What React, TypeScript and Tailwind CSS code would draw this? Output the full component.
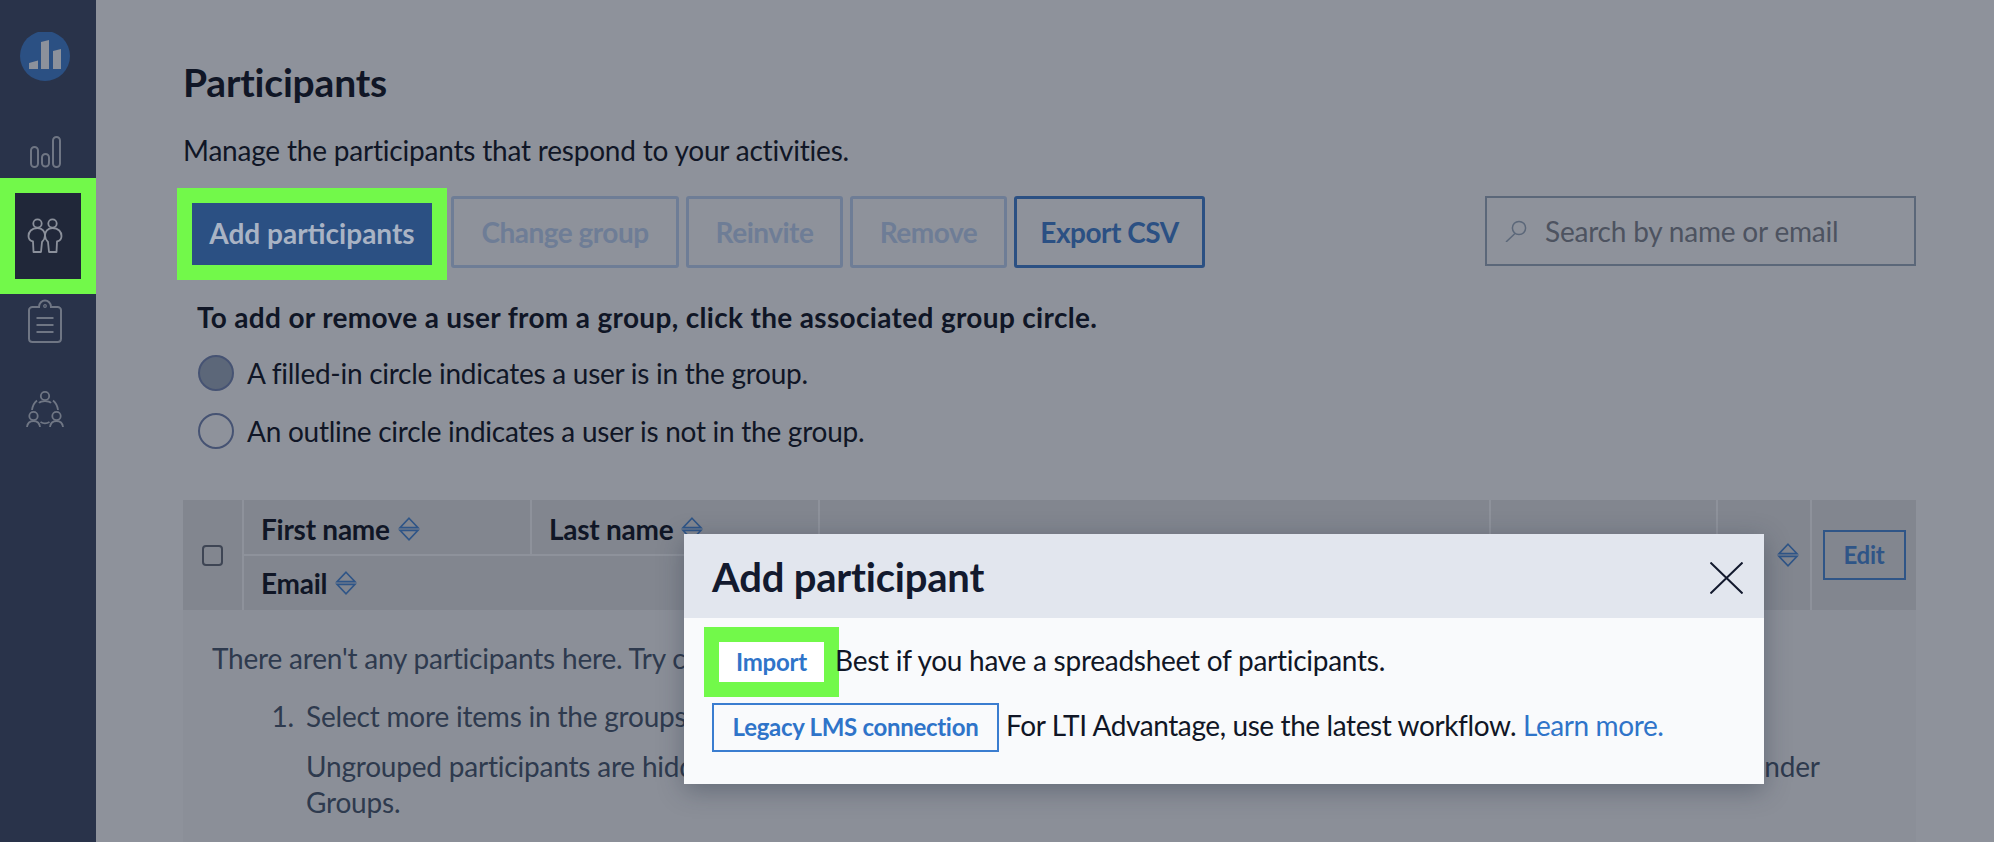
const ICON = '#6f7684';
const ICON_ACTIVE = '#8b909b';
const HEADER_CELL = 'bg-[#82868f]';

function SortIcon() {
  return (
    <svg viewBox="0 0 22 24" className="h-6 w-[22px] shrink-0" fill="none" stroke="#2f5587" strokeWidth="1.6">
      <path d="M11 1.2 L20 10.6 H2 Z" />
      <path d="M2 13.4 H20 L11 22.8 Z" />
    </svg>
  );
}

function Logo() {
  return (
    <svg viewBox="0 0 50 50" className="h-[50px] w-[50px]">
      <circle cx="25" cy="24" r="25" fill="#2b5083" />
      <path d="M9 37 V31 L18 28.5 V37 Z M21 37 V10 L29 8 V37 Z M33 37 V19 L41 17 V37 Z" fill="#8c919b" />
    </svg>
  );
}

function BarsIcon() {
  return (
    <svg viewBox="0 0 32 32" className="h-8 w-8" fill="none" stroke={ICON} strokeWidth="2">
      <rect x="2" y="11" width="7" height="20" rx="3.5" />
      <rect x="13" y="18" width="7" height="12.5" rx="3.5" />
      <rect x="24" y="1" width="7" height="30" rx="3.5" />
    </svg>
  );
}

function PeopleIcon() {
  return (
    <svg viewBox="0 0 36 36" className="h-9 w-9" fill="none" stroke={ICON_ACTIVE} strokeWidth="1.8" strokeLinejoin="round">
      <circle cx="10.5" cy="5.5" r="4.2" />
      <circle cx="25.5" cy="5.5" r="4.2" />
      <path d="M10.5 10 C4.5 10 1.5 14 1.5 18 C1.5 21 3.5 23 6 23.5 L6.5 34 H14 L15 24 C17 22 18 20 18 17.5 C18 14 15.5 10 10.5 10 Z" />
      <path d="M18 17.5 C18 14 20.5 10 25.5 10 C31.5 10 34.5 14 34.5 18 C34.5 21 32.5 23 30 23.5 L29.5 34 H22 L21 24 C19 22 18 20 18 17.5 Z" />
    </svg>
  );
}

function ClipboardIcon() {
  return (
    <svg viewBox="0 0 34 44" className="h-11 w-[34px]" fill="none" stroke={ICON} strokeWidth="2">
      <path d="M11 8 C11 4 14 1.5 17 1.5 C20 1.5 23 4 23 8 H29.5 C31.5 8 33 9.5 33 11 V39.5 C33 41.5 31.5 43 29.5 43 H4.5 C2.5 43 1 41.5 1 39.5 V11 C1 9.5 2.5 8 4.5 8 Z" />
      <circle cx="17" cy="7" r="1.3" strokeWidth="1.2" />
      <path d="M8.5 19 H25.5 M8.5 26 H25.5 M8.5 33 H25.5" />
    </svg>
  );
}

function GroupIcon() {
  return (
    <svg viewBox="0 0 38 38" className="h-[38px] w-[38px]" fill="none" stroke={ICON} strokeWidth="1.8">
      <circle cx="19" cy="6" r="4.2" />
      <path d="M13 13 C15 10.5 23 10.5 25 13" />
      <path d="M6 20 C6.5 16 8.5 12.5 11 10.5 M32 20 C31.5 16 29.5 12.5 27 10.5" />
      <circle cx="7.5" cy="26" r="4.2" />
      <circle cx="30.5" cy="26" r="4.2" />
      <path d="M1 37 C1.5 33 4 31 7.5 31 C11 31 13.5 33 14 37 M24 37 C24.5 33 27 31 30.5 31 C34 31 36.5 33 37 37" />
      <path d="M14.5 32 C17 33.5 21 33.5 23.5 32" />
    </svg>
  );
}

function SearchIcon() {
  return (
    <svg viewBox="0 0 22 22" className="h-[22px] w-[22px] shrink-0" fill="none" stroke="#5b6779" strokeWidth="1.5">
      <circle cx="14" cy="8" r="6.6" />
      <path d="M10 13.5 L1 22" />
    </svg>
  );
}

function ToolbarButton({ label, className }: { label: string; className: string }) {
  return (
    <div className={`flex h-[72px] items-center justify-center rounded-[3px] border-[3px] text-[28px] font-bold tracking-[-0.5px] ${className}`}>
      {label}
    </div>
  );
}

export default function App() {
  return (
    <div className="relative flex h-[842px] w-full overflow-hidden bg-[#8e929b] font-['Lato',sans-serif] tracking-[-0.2px] text-[#101626]">
      <aside className="flex w-24 shrink-0 flex-col items-center bg-[#29334a] pt-8">
        <div className="pr-1.5">
          <Logo />
        </div>
        <div className="mt-[54px] pr-1.5">
          <BarsIcon />
        </div>
        <div className="mt-[10px] flex h-[116px] w-24 items-center justify-center border-[15px] border-[#72f94a] bg-[#202739] pr-1.5">
          <PeopleIcon />
        </div>
        <div className="mt-[5px] pr-1.5">
          <ClipboardIcon />
        </div>
        <div className="mt-[47px] pr-1.5">
          <GroupIcon />
        </div>
      </aside>

      <main className="min-w-0 flex-1 pl-[87px] pr-[78px] pt-[58px]">
        <h1 className="text-[39px] leading-[48px] font-bold">Participants</h1>
        <p className="mt-[26px] text-[28px] leading-9">Manage the participants that respond to your activities.</p>

        <div className="mt-[20px] flex items-start">
          <div className="-ml-[6px] flex h-[92px] w-[270px] shrink-0 items-center justify-center border-[15px] border-[#72f94a] bg-[#2b5083] pb-[3px] text-[28px] font-bold tracking-[0px] text-[#a9b3c4]">
            Add participants
          </div>
          <div className="mt-2 ml-1 flex gap-[7px]">
            <ToolbarButton label="Change group" className="w-[228px] border-[#6e7d96] text-[#6e7d96]" />
            <ToolbarButton label="Reinvite" className="w-[157px] border-[#6e7d96] text-[#6e7d96]" />
            <ToolbarButton label="Remove" className="w-[157px] border-[#6e7d96] text-[#6e7d96]" />
            <ToolbarButton label="Export CSV" className="w-[191px] border-[#2b5083] text-[#2b5083]" />
          </div>
          <div className="mt-2 ml-auto flex h-[70px] w-[431px] items-center gap-[18px] border-2 border-[#5b6779] pl-[18px] text-[28px] text-[#4d5360]">
            <SearchIcon />
            Search by name or email
          </div>
        </div>

        <div className="mt-[19px] pl-[14px]">
          <p className="text-[28px] leading-9 font-bold tracking-[0.33px]">To add or remove a user from a group, click the associated group circle.</p>
          <div className="mt-[20px] flex items-center gap-[13px] pl-px tracking-[-0.26px]">
            <span className="h-9 w-9 rounded-full border-2 border-[#465373] bg-[#5c6779]" />
            <span className="text-[28px] leading-9">A filled-in circle indicates a user is in the group.</span>
          </div>
          <div className="mt-[22px] flex items-center gap-[13px] pl-px tracking-[-0.26px]">
            <span className="h-9 w-9 rounded-full border-2 border-[#465373]" />
            <span className="text-[28px] leading-9">An outline circle indicates a user is not in the group.</span>
          </div>
        </div>

        <div className="mt-[51px]">
          <div className="flex h-[110px] gap-[2px] text-[28px] font-bold tracking-[-0.25px]">
            <div className={`flex w-[59px] items-center justify-center ${HEADER_CELL}`}>
              <span className="h-[21px] w-[21px] rounded-[4px] border-2 border-[#3e4554]" />
            </div>
            <div className="flex flex-1 flex-col gap-[2px]">
              <div className="flex h-[54px] gap-[2px]">
                <div className={`flex w-[286px] items-center gap-2 pl-[17px] pt-[4px] ${HEADER_CELL}`}>
                  First name
                  <SortIcon />
                </div>
                <div className={`flex w-[286px] items-center gap-2 pl-[17px] pt-[4px] ${HEADER_CELL}`}>
                  Last name
                  <SortIcon />
                </div>
                <div className={`w-[669px] ${HEADER_CELL}`} />
                <div className={`flex-1 ${HEADER_CELL}`} />
              </div>
              <div className={`flex h-[54px] items-center gap-2 pl-[17px] ${HEADER_CELL}`}>
                Email
                <SortIcon />
              </div>
            </div>
            <div className={`flex w-[92px] items-center justify-end pr-[11px] ${HEADER_CELL}`}>
              <SortIcon />
            </div>
            <div className={`flex w-[104px] items-center justify-center ${HEADER_CELL}`}>
              <div className="flex h-[50px] w-[83px] items-center justify-center border-2 border-[#2f5587] text-[24px] text-[#2f5587]">
                Edit
              </div>
            </div>
          </div>

          <div className="h-[232px] bg-[#8b8f98] pl-[29px] pt-[30px] text-[28px] leading-9 text-[#2e3a4e]">
            <p>There aren&apos;t any participants here. Try changing your filters or groups.</p>
            <div className="mt-[22px] flex">
              <span className="w-[94px] pr-3 text-right">1.</span>
              <div className="min-w-0 flex-1">
                <p>Select more items in the groups column on the left side of the page.</p>
                <p className="mt-[14px] whitespace-nowrap">
                  Ungrouped participants are hidden by default. To show them, choose the matching options in the filter menus displayed under
                  <br />
                  Groups.
                </p>
              </div>
            </div>
          </div>
        </div>
      </main>

      <div className="absolute top-[534px] left-[684px] h-[250px] w-[1080px] bg-[#f9fafc] shadow-[0_6px_24px_rgba(30,40,60,0.35)]">
        <div className="flex h-[84px] items-center justify-between bg-[#e2e6ee] pl-7 pr-[21px]">
          <h2 className="pt-[2px] text-[40px] font-bold text-[#131a2e]">Add participant</h2>
          <svg viewBox="0 0 33 32" className="mt-1 h-8 w-[33px]" fill="none" stroke="#131a2e" strokeWidth="2">
            <path d="M0.5 0.5 L32.5 31.5 M32.5 0.5 L0.5 31.5" />
          </svg>
        </div>
        <div className="pl-[20px] pt-[9px] text-[28px] tracking-[-0.4px]">
          <div className="flex h-[70px] items-center">
            <div className="flex h-[70px] w-[135px] shrink-0 items-center justify-center border-[15px] border-[#72f94a] bg-white text-[24px] font-bold tracking-[-0.2px] text-[#2f74c9]">
              Import
            </div>
            <span className="-ml-[4px] pb-[5px] tracking-[-0.26px]">Best if you have a spreadsheet of participants.</span>
          </div>
          <div className="mt-[6px] ml-2 flex h-[49px] items-center gap-[7px]">
            <div className="flex h-[49px] w-[287px] shrink-0 items-center justify-center border-2 border-[#3b7dd0] pb-[2px] text-[24px] font-bold tracking-[-0.3px] text-[#2f74c9]">
              Legacy LMS connection
            </div>
            <span className="pb-[5px]">
              For LTI Advantage, use the latest workflow. <span className="text-[#2f74c9]">Learn more.</span>
            </span>
          </div>
        </div>
      </div>
    </div>
  );
}
